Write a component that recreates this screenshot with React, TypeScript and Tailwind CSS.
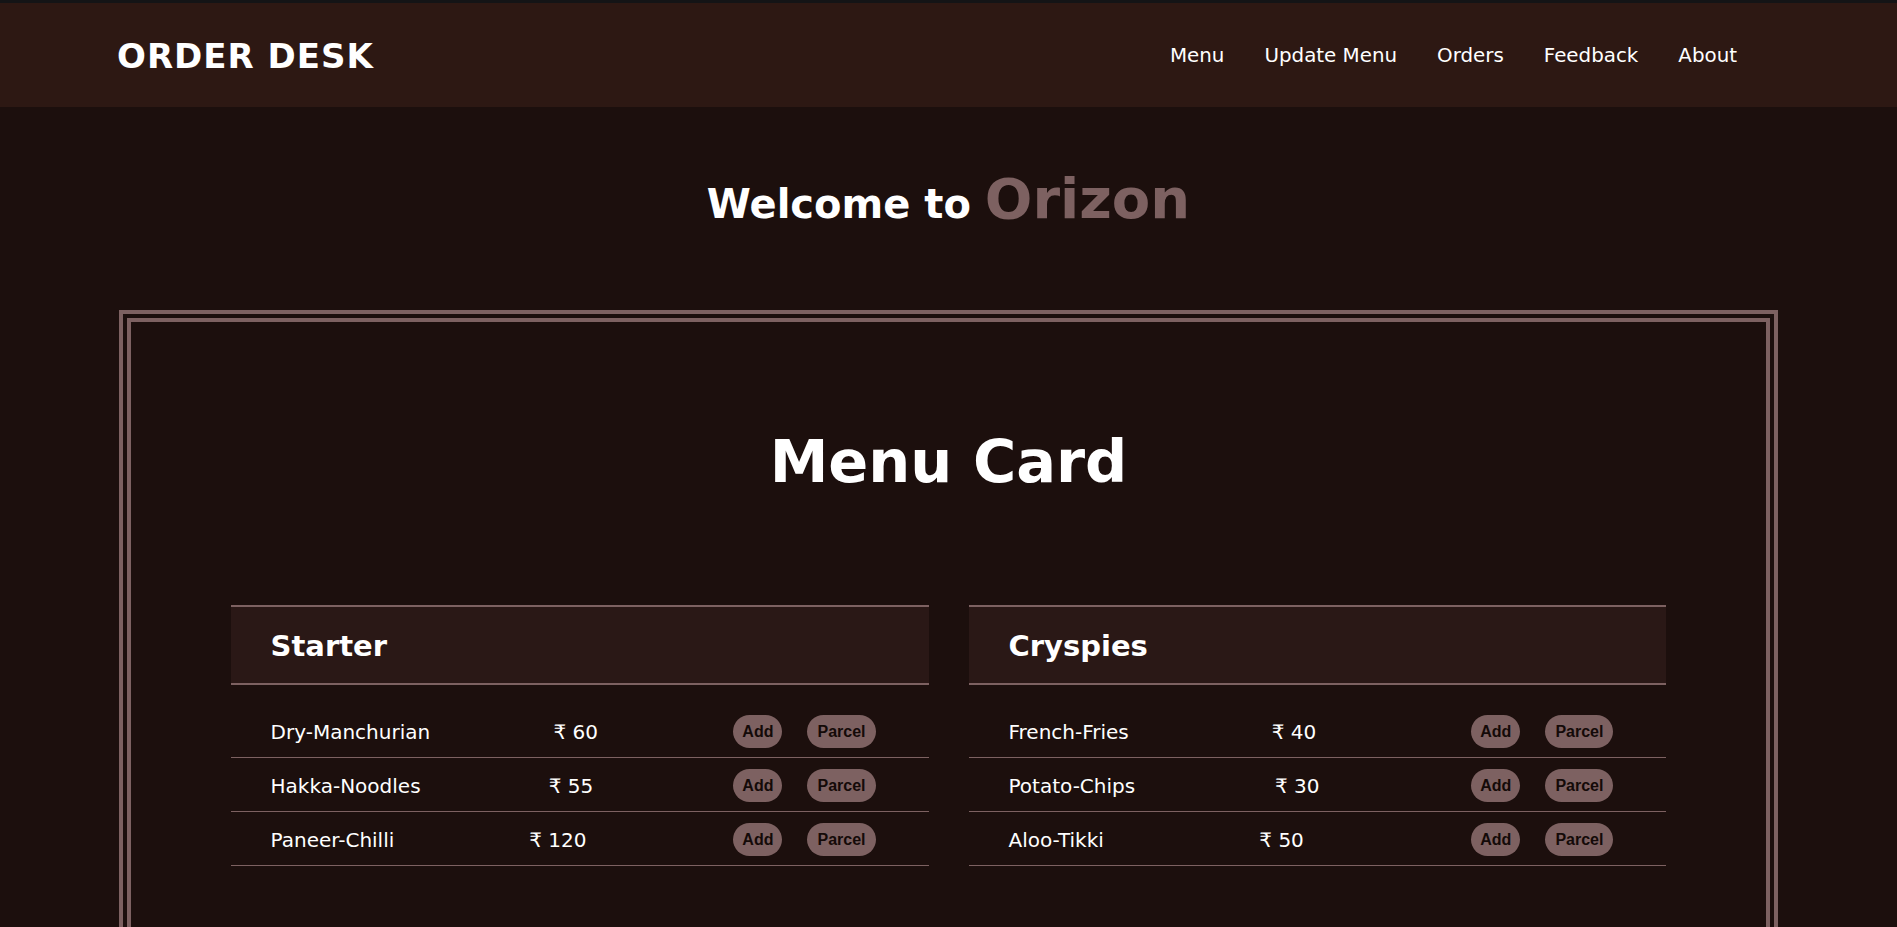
const navLinks = ["Menu", "Update Menu", "Orders", "Feedback", "About"];

const sections = [
  {
    title: "Starter",
    items: [
      { name: "Dry-Manchurian", price: 60 },
      { name: "Hakka-Noodles", price: 55 },
      { name: "Paneer-Chilli", price: 120 },
    ],
  },
  {
    title: "Cryspies",
    items: [
      { name: "French-Fries", price: 40 },
      { name: "Potato-Chips", price: 30 },
      { name: "Aloo-Tikki", price: 50 },
    ],
  },
];

type Item = { name: string; price: number };

function MenuSection({ title, items }: { title: string; items: Item[] }) {
  return (
    <div>
      <div className="flex h-[80px] items-center border-y-2 border-[#7d6161] bg-[#2a1816] pl-10 pt-[3px]">
        <h2 className="text-[29px] font-bold leading-none text-white">{title}</h2>
      </div>

      <div className="pt-[19px]">
        {items.map((item) => (
          <div
            key={item.name}
            className="flex h-[54px] items-center border-b border-[#7d6161] pl-10 pr-[53px] pt-[2px] text-[20px] text-white"
          >
            <span className="shrink-0">{item.name}</span>
            <span className="flex-1 text-center">₹ {item.price}</span>
            <button className="ml-3 rounded-full bg-[#7d6161] px-[9px] py-[7px] font-['Liberation_Sans',Arial,sans-serif] text-[16px] font-bold leading-[19px] text-[#140a08]">
              Add
            </button>
            <button className="ml-[25px] rounded-full bg-[#7d6161] px-[10px] py-[7px] font-['Liberation_Sans',Arial,sans-serif] text-[16px] font-bold leading-[19px] text-[#140a08]">
              Parcel
            </button>
          </div>
        ))}
      </div>
    </div>
  );
}

export default function App() {
  return (
    <div className="min-h-screen bg-[#1c0f0d] font-['DejaVu_Sans',Verdana,sans-serif] text-white">
      {/* Top bar */}
      <header className="flex h-[107px] items-center justify-between border-t-[3px] border-[#141416] bg-[#2d1813] pl-[117px] pr-[160px] pt-[2px]">
        <span className="text-[34px] font-bold tracking-[1px] text-white">ORDER DESK</span>
        <nav className="flex items-center gap-10">
          {navLinks.map((link) => (
            <a key={link} href="#" className="text-[19.85px] text-white">
              {link}
            </a>
          ))}
        </nav>
      </header>

      <h1 className="mt-[64px] text-center text-[40px] font-bold leading-none text-white">
        Welcome to <span className="text-[56px] text-[#7d6161]">Orizon</span>
      </h1>

      {/* Menu frame */}
      <section className="mx-auto mt-[83px] w-[87.5%] border-[12px] border-double border-[#7d6161] px-[100px] pb-[120px] pt-[110px]">
        <h2 className="text-center text-[59px] font-bold leading-none text-white">Menu Card</h2>

        <div className="mt-[114px] grid grid-cols-2 gap-10">
          {sections.map((s) => (
            <MenuSection key={s.title} title={s.title} items={s.items} />
          ))}
        </div>
      </section>
    </div>
  );
}
